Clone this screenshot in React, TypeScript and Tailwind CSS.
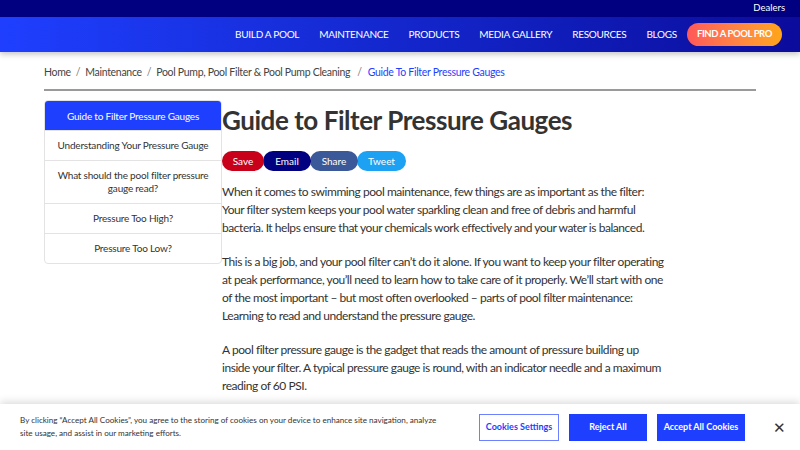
import React from 'react';

const navItems = ['Build a Pool', 'Maintenance', 'Products', 'Media Gallery', 'Resources', 'Blogs'];

const sideItems = [
    'Guide to Filter Pressure Gauges',
    'Understanding Your Pressure Gauge',
    'What should the pool filter pressure gauge read?',
    'Pressure Too High?',
    'Pressure Too Low?',
];

const shareButtons = [
    { label: 'Save', cls: 'bg-[#c8001a] z-40 w-[42px]' },
    { label: 'Email', cls: 'bg-[#000080] z-30 w-[48px] -ml-[1px]' },
    { label: 'Share', cls: 'bg-[#3b5998] z-20 w-[48px] -ml-[1px]' },
    { label: 'Tweet', cls: 'bg-[#1da1f2] z-10 w-[49px] -ml-[1px]' },
];

const App = () => {
    return (
        <div className="relative h-[450px] w-[800px] overflow-hidden bg-white font-['Lato',sans-serif] text-[#333]">
            <header className="relative z-10 shadow-[0_2px_6px_rgba(0,0,0,0.25)]">
                <div className="flex h-[17px] items-center justify-end bg-[#000080] pr-[15px] text-[9.5px] text-white">
                    Dealers
                </div>
                <nav className="flex h-[35px] items-center justify-end gap-5 bg-gradient-to-r from-[#1f3fff] to-[#0b0b9c] pr-[18px] text-[10px] uppercase tracking-[-0.3px] text-white">
                    {navItems.map((item) => (
                        <span key={item}>{item}</span>
                    ))}
                    <span className="-ml-2.5 flex h-[23px] items-center rounded-full bg-gradient-to-r from-[#ff5858] to-[#ffa514] px-[10px] text-[9.5px] font-bold tracking-[-0.4px]">
                        Find a Pool Pro
                    </span>
                </nav>
            </header>

            <main className="mx-[44px]">
                <div className="flex h-[39px] items-end gap-[5px] border-b-2 border-[#9a9a9a] pb-[8px] text-[10.5px] tracking-[-0.3px] text-[#444]">
                    <span>Home</span>
                    <span className="text-[#777]">/</span>
                    <span>Maintenance</span>
                    <span className="text-[#777]">/</span>
                    <span>Pool Pump, Pool Filter &amp; Pool Pump Cleaning</span>
                    <span className="ml-[2px] text-[#777]">/</span>
                    <span className="ml-[1px] text-[#1f3fff]">Guide To Filter Pressure Gauges</span>
                </div>

                <div className="mt-[9px] flex">
                    <aside className="w-[178px] shrink-0 self-start overflow-hidden rounded border border-[#e3e3e3] text-[10px] tracking-[-0.2px] text-[#333]">
                        {sideItems.map((item, i) => (
                            <div
                                key={item}
                                className={
                                    i === 0
                                        ? 'flex min-h-[29px] items-center justify-center bg-[#1f3fff] px-2 py-[7px] text-center leading-[14px] text-white'
                                        : 'flex min-h-[30px] items-center justify-center border-t border-[#e3e3e3] px-2 py-[8px] text-center leading-[13px]'
                                }
                            >
                                {item}
                            </div>
                        ))}
                    </aside>

                    <article className="w-[446px]">
                        <h1 className="mt-[3px] text-[26px] font-bold leading-[34px] tracking-[-0.45px] text-[#333]">
                            Guide to Filter Pressure Gauges
                        </h1>
                        <div className="mt-[14px] flex">
                            {shareButtons.map((b) => (
                                <span
                                    key={b.label}
                                    className={`relative flex h-[20px] items-center justify-center rounded-full text-[10px] text-white ${b.cls}`}
                                >
                                    {b.label}
                                </span>
                            ))}
                        </div>
                        <div className="mt-[12px] space-y-[16px] text-[12px] leading-[18px] tracking-[-0.45px] text-[#333]">
                            <p>
                                When it comes to swimming pool maintenance, few things are as important as the filter: Your filter system keeps your pool water sparkling clean and free of debris and harmful bacteria. It helps ensure that your chemicals work effectively and your water is balanced.
                            </p>
                            <p>
                                This is a big job, and your pool filter can’t do it alone. If you want to keep your filter operating at peak performance, you’ll need to learn how to take care of it properly. We’ll start with one of the most important – but most often overlooked – parts of pool filter maintenance: Learning to read and understand the pressure gauge.
                            </p>
                            <p>
                                A pool filter pressure gauge is the gadget that reads the amount of pressure building up inside your filter. A typical pressure gauge is round, with an indicator needle and a maximum reading of 60 PSI.
                            </p>
                        </div>
                    </article>
                </div>
            </main>

            <div className="absolute bottom-0 left-0 right-0 z-20 flex h-[46px] items-center bg-white pl-[20px] pr-[14px] shadow-[0_-2px_8px_rgba(0,0,0,0.15)]">
                <p className="w-[425px] font-['Liberation_Sans_Narrow','Lato',sans-serif] text-[8.1px] leading-[13px] text-[#333]">
                    By clicking “Accept All Cookies”, you agree to the storing of cookies on your device to enhance site navigation, analyze site usage, and assist in our marketing efforts.
                </p>
                <div className="ml-auto flex items-center gap-[10px] font-['Liberation_Sans_Narrow','Lato',sans-serif] text-[9px] font-bold">
                    <button className="h-[27px] w-[80px] border border-[#6d80ff] bg-white text-[#1f3fff]">Cookies Settings</button>
                    <button className="h-[27px] w-[78px] bg-[#1f3fff] text-white">Reject All</button>
                    <button className="h-[27px] w-[88px] bg-[#1f3fff] text-white">Accept All Cookies</button>
                    <span className="ml-[18px] text-[15px] font-normal text-[#333]">✕</span>
                </div>
            </div>
        </div>
    );
};

export default App;
